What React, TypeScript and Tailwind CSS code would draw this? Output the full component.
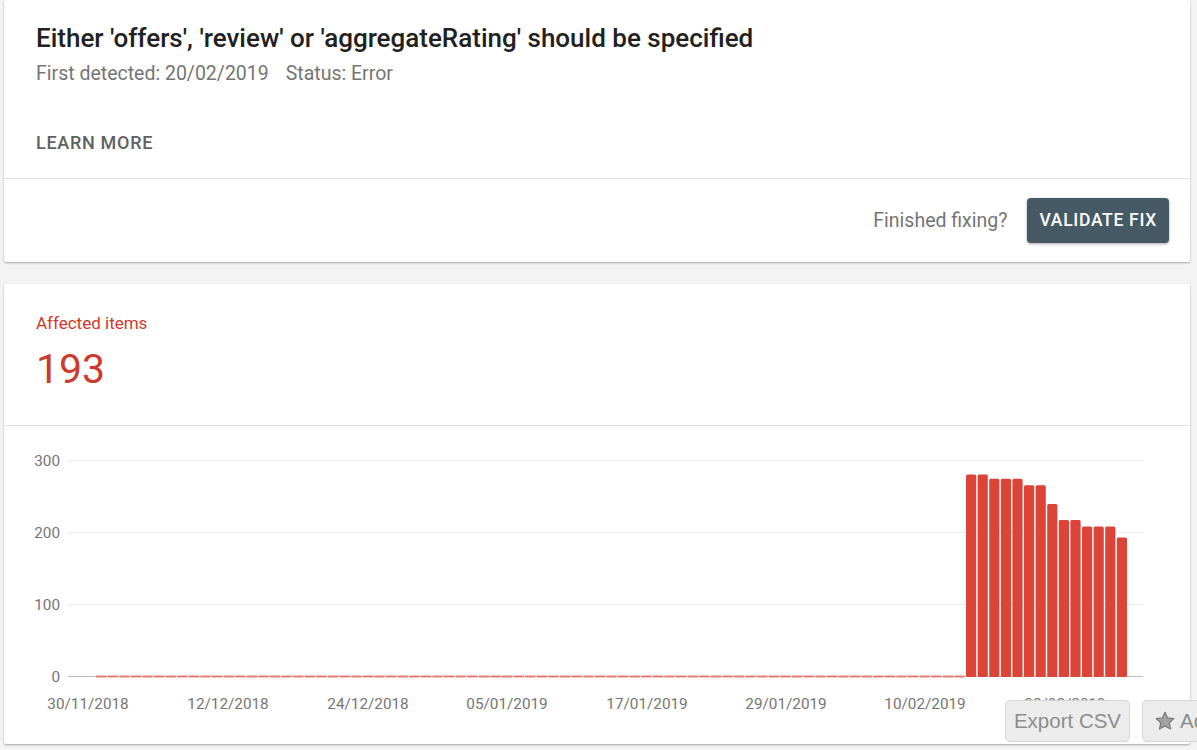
import React from "react";

const bars = [280, 280, 274, 274, 274, 265, 265, 239, 217, 217, 208, 208, 208, 193];
const xLabels = [
  { x: 88, t: "30/11/2018" },
  { x: 228, t: "12/12/2018" },
  { x: 368, t: "24/12/2018" },
  { x: 507, t: "05/01/2019" },
  { x: 647, t: "17/01/2019" },
  { x: 786, t: "29/01/2019" },
  { x: 925, t: "10/02/2019" },
  { x: 1065, t: "22/02/2019" },
];
const yLabels = [
  { v: 300, y: 460 },
  { v: 200, y: 532 },
  { v: 100, y: 604 },
  { v: 0, y: 676 },
];

function Chart() {
  const ox = 4;
  const oy = 426;
  const step = 11.6;
  const start = 96;
  const zeroDays = 75;
  const base = 677;
  const scale = 217 / 300;
  return (
    <svg width={1186} height={317} className="block" style={{ fontFamily: "Roboto, sans-serif" }}>
      {yLabels.map((l) => (
        <g key={l.v}>
          <line
            x1={68 - ox}
            x2={1143 - ox}
            y1={l.y - oy + 0.5}
            y2={l.y - oy + 0.5}
            stroke={l.v === 0 ? "#bdbdbd" : "#eeeeee"}
            strokeWidth={1}
          />
          <text x={60 - ox} y={l.y - oy + 5.5} textAnchor="end" fontSize={15.3} fill="#757575">
            {l.v}
          </text>
        </g>
      ))}
      {Array.from({ length: zeroDays }).map((_, i) => (
        <rect key={i} x={start + i * step - ox} y={base - 1.5 - oy} width={step - 1.4} height={2} fill="#e77b71" />
      ))}
      {bars.map((v, i) => {
        const h = v * scale;
        const x = start + (zeroDays + i) * step - ox;
        return <rect key={i} x={x} y={base - h - oy} width={step - 1.4} height={h} rx={1.5} fill="#db4437" />;
      })}
      {xLabels.map((l) => (
        <text key={l.t} x={l.x - ox} y={708.5 - oy} textAnchor="middle" fontSize={15.3} fill="#757575">
          {l.t}
        </text>
      ))}
    </svg>
  );
}

export default function App() {
  return (
    <div
      className="relative w-[1197px] h-[750px] overflow-hidden bg-[#f3f3f3]"
      style={{ fontFamily: "Roboto, 'Noto Sans', sans-serif" }}
    >
      <div className="flex flex-col gap-[22px] pl-[4px] pr-[7px]">
        {/* Card 1 */}
        <div className="bg-white rounded-[2px] shadow-[0_1px_2px_rgba(0,0,0,0.25),0_1px_3px_rgba(0,0,0,0.08)] h-[262px] flex flex-col">
          <div className="pl-[32px] pt-[22px] pb-[23px] border-b border-[#e0e0e0]">
            <div className="text-[26px] leading-[32px] font-medium text-[#212121]">
              Either 'offers', 'review' or 'aggregateRating' should be specified
            </div>
            <div className="mt-[8px] text-[19.5px] leading-[24px] text-[#757575] flex gap-[17px]">
              <span>First detected: 20/02/2019</span>
              <span>Status: Error</span>
            </div>
            <div className="mt-[45px] text-[18px] leading-[24px] font-medium tracking-[0.7px] text-[#616161]">
              LEARN MORE
            </div>
          </div>
          <div className="flex-1 flex items-center justify-end pr-[21px] gap-[20px]">
            <span className="text-[19.5px] text-[#757575]">Finished fixing?</span>
            <button className="h-[45px] px-[12px] rounded-[4px] bg-[#455a64] text-white text-[17.5px] font-medium tracking-[0.7px] shadow-[0_1px_3px_rgba(0,0,0,0.35)]">
              VALIDATE FIX
            </button>
          </div>
        </div>

        {/* Card 2 */}
        <div className="bg-white rounded-[2px] shadow-[0_1px_2px_rgba(0,0,0,0.25),0_1px_3px_rgba(0,0,0,0.08)] h-[460px] flex flex-col">
          <div className="pl-[32px] pt-[29px] pb-[32px] border-b border-[#e0e0e0]">
            <div className="text-[17px] leading-[20px] text-[#d0392b]">Affected items</div>
            <div className="mt-[12px] text-[41px] leading-[48px] text-[#cc3b2d]">193</div>
          </div>
          <Chart />
        </div>
      </div>

      {/* Overlay buttons */}
      <div
        className="absolute left-[1005px] top-[700px] w-[125px] h-[42px] rounded-[5px] border border-[#d6d6d6] bg-[#ececec] flex items-center justify-center text-[20.5px] text-[#8c8c8c]"
        style={{ fontFamily: "'Liberation Sans', Arial, sans-serif" }}
      >
        Export CSV
      </div>
      <div
        className="absolute left-[1142px] top-[700px] w-[120px] h-[42px] rounded-[5px] border border-[#d6d6d6] bg-[#ececec] flex items-center pl-[11px] gap-[4px] text-[20.5px] text-[#8c8c8c]"
        style={{ fontFamily: "'Liberation Sans', Arial, sans-serif" }}
      >
        <svg width="22" height="22" viewBox="0 0 24 24">
          <path
            d="M12 2.5l2.9 6.2 6.7.7-5 4.6 1.4 6.7L12 17.3l-6 3.4 1.4-6.7-5-4.6 6.7-.7z"
            fill="#a3a3a3"
            stroke="#7a7a7a"
            strokeWidth="1.4"
            strokeLinejoin="round"
          />
        </svg>
        <span>Add</span>
      </div>
    </div>
  );
}
